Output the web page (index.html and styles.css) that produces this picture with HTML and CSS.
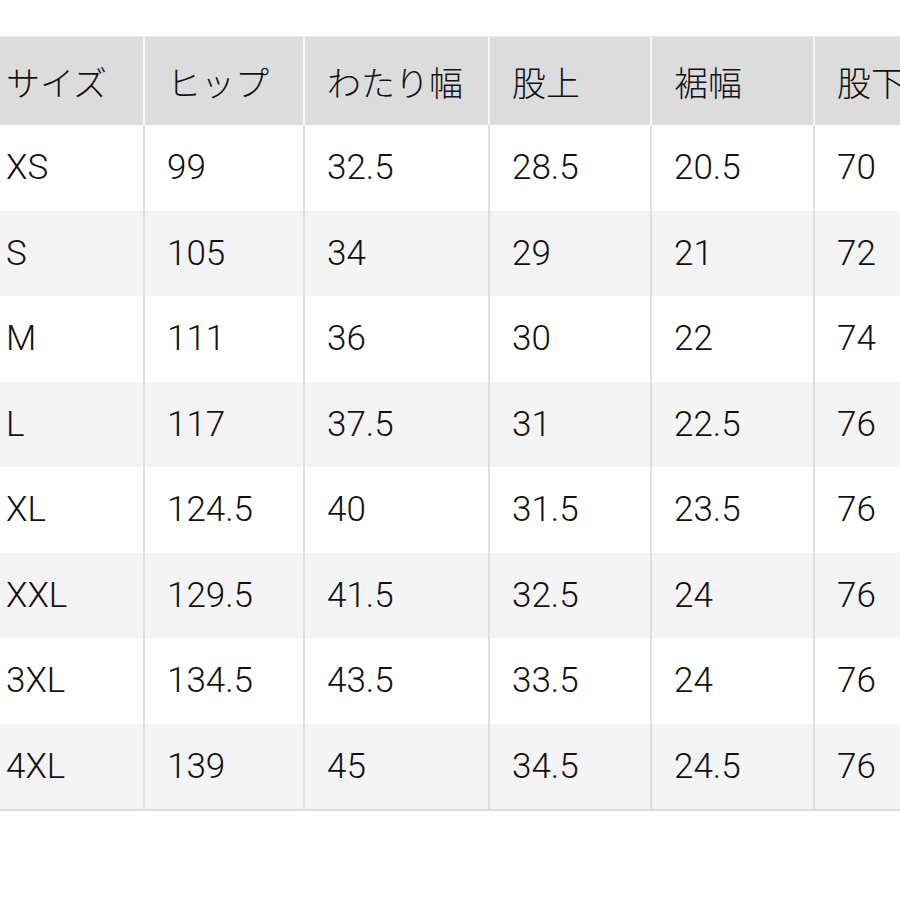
FILE: index.html
```html
<!DOCTYPE html>
<html lang="ja">
<head>
<meta charset="utf-8">
<link rel="stylesheet" href="styles.css">
</head>
<body>
<div class="viewport">
  <div class="table">
    <div class="cell head">サイズ</div><div class="cell head">ヒップ</div><div class="cell head">わたり幅</div><div class="cell head">股上</div><div class="cell head">裾幅</div><div class="cell head">股下</div>

    <div class="cell">XS</div><div class="cell">99</div><div class="cell">32.5</div><div class="cell">28.5</div><div class="cell">20.5</div><div class="cell">70</div>

    <div class="cell alt">S</div><div class="cell alt">105</div><div class="cell alt">34</div><div class="cell alt">29</div><div class="cell alt">21</div><div class="cell alt">72</div>

    <div class="cell">M</div><div class="cell">111</div><div class="cell">36</div><div class="cell">30</div><div class="cell">22</div><div class="cell">74</div>

    <div class="cell alt">L</div><div class="cell alt">117</div><div class="cell alt">37.5</div><div class="cell alt">31</div><div class="cell alt">22.5</div><div class="cell alt">76</div>

    <div class="cell">XL</div><div class="cell">124.5</div><div class="cell">40</div><div class="cell">31.5</div><div class="cell">23.5</div><div class="cell">76</div>

    <div class="cell alt">XXL</div><div class="cell alt">129.5</div><div class="cell alt">41.5</div><div class="cell alt">32.5</div><div class="cell alt">24</div><div class="cell alt">76</div>

    <div class="cell">3XL</div><div class="cell">134.5</div><div class="cell">43.5</div><div class="cell">33.5</div><div class="cell">24</div><div class="cell">76</div>

    <div class="cell alt">4XL</div><div class="cell alt">139</div><div class="cell alt">45</div><div class="cell alt">34.5</div><div class="cell alt">24.5</div><div class="cell alt">76</div>
  </div>
</div>
</body>
</html>
```

FILE: styles.css
```css
html, body {
  margin: 0;
  padding: 0;
  background: #ffffff;
}

.viewport {
  width: 900px;
  height: 900px;
  overflow: hidden;
  padding-top: 36px;
  box-sizing: border-box;
}

.table {
  margin-left: -16px;
  width: 996px;
  display: grid;
  grid-template-columns: 161px 160px 185px 162px 163px 165px;
  grid-template-rows: 88px repeat(8, 85.5px);
  border-top: 1px solid #e8e8e8;
  border-bottom: 2px solid #dcdcdc;
  font-family: Roboto, "Noto Sans CJK JP", sans-serif;
  font-weight: 300;
  font-size: 35px;
  color: #111111;
}

.cell {
  display: flex;
  align-items: center;
  padding-left: 22px;
  box-sizing: border-box;
  border-right: 2px solid #dedede;
  background: #ffffff;
  white-space: nowrap;
}

.cell.alt {
  background: #f4f4f4;
}

.cell.head {
  background: #dcdcdc;
  border-right-color: #f6f6f6;
  font-family: "Noto Sans CJK JP", sans-serif;
  font-weight: 300;
  font-size: 34px;
}
```
